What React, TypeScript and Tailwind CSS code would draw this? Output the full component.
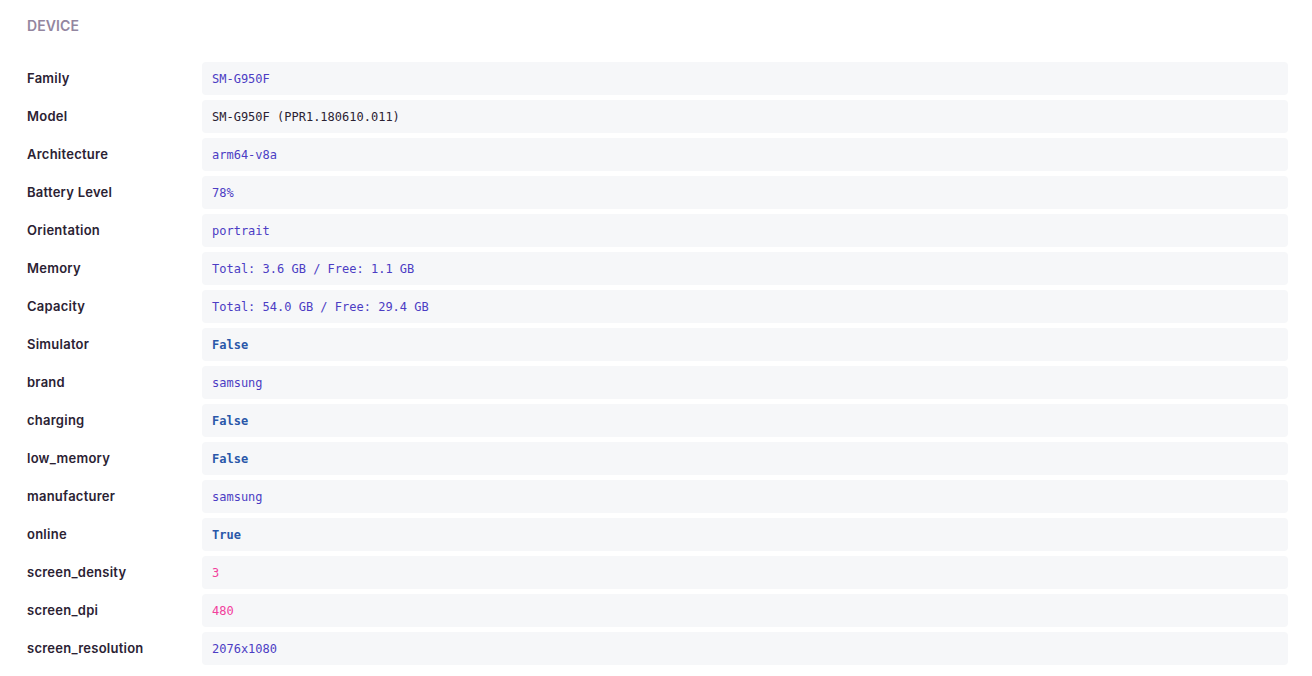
import React from "react";

type Kind = "str" | "plain" | "bool" | "num";
const rows: [string, string, Kind][] = [
  ["Family", "SM-G950F", "str"],
  ["Model", "SM-G950F (PPR1.180610.011)", "plain"],
  ["Architecture", "arm64-v8a", "str"],
  ["Battery Level", "78%", "str"],
  ["Orientation", "portrait", "str"],
  ["Memory", "Total: 3.6 GB / Free: 1.1 GB", "str"],
  ["Capacity", "Total: 54.0 GB / Free: 29.4 GB", "str"],
  ["Simulator", "False", "bool"],
  ["brand", "samsung", "str"],
  ["charging", "False", "bool"],
  ["low_memory", "False", "bool"],
  ["manufacturer", "samsung", "str"],
  ["online", "True", "bool"],
  ["screen_density", "3", "num"],
  ["screen_dpi", "480", "num"],
  ["screen_resolution", "2076x1080", "str"],
];

const cls: Record<Kind, string> = {
  str: "text-[#4c3dc4]",
  plain: "text-[#2b2233]",
  bool: "text-[#2a57a9] font-bold",
  num: "text-[#f2409c]",
};

export default function App() {
  return (
    <div className="w-[1312px] h-[676px] bg-white pl-[27px] pr-[24px] pt-[18px]" style={{ fontFamily: "Inter, 'Noto Sans', sans-serif" }}>
      <h2 className="text-[14px] leading-[16px] font-semibold text-[#9386a0] uppercase tracking-[0.1px]">Device</h2>
      <div className="mt-[28px] flex flex-col gap-[5px]">
        {rows.map(([k, v, t]) => (
          <div key={k} className="flex items-center">
            <div className="w-[175px] shrink-0 pt-[1px] text-[13px] font-semibold tracking-[0.25px] text-[#2b2233]">{k}</div>
            <div
              className={`flex-1 h-[33px] rounded-[4px] bg-[#f6f7f9] px-[10px] pt-[1px] flex items-center text-[12px] ${cls[t]}`}
              style={{ fontFamily: "'DejaVu Sans Mono', monospace" }}
            >
              {v}
            </div>
          </div>
        ))}
      </div>
    </div>
  );
}
